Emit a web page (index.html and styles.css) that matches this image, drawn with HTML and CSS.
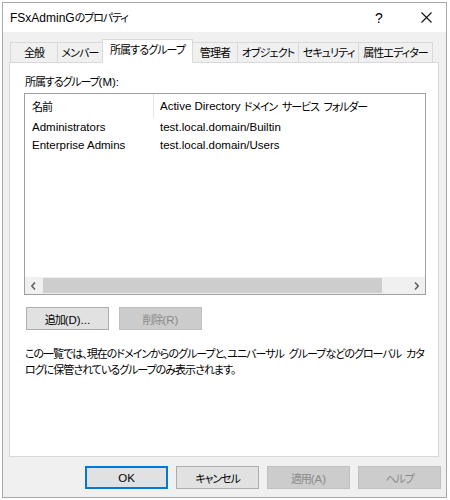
FILE: index.html
```html
<!DOCTYPE html>
<html lang="ja">
<head>
<meta charset="utf-8">
<title>FSxAdminGのプロパティ</title>
<link rel="stylesheet" href="styles.css">
</head>
<body>
<div class="window">
  <div class="titlebar">
    <span class="title">FSxAdminG<span class="ja">のプロパティ</span></span>
    <span class="help">?</span>
    <span class="close"><svg width="11" height="11" viewBox="0 0 11 11"><path d="M0.5 0.5L10.5 10.5M10.5 0.5L0.5 10.5" stroke="#111" stroke-width="1.1" fill="none"/></svg></span>
  </div>
  <div class="client">
    <div class="tabs">
      <div class="tab t1 ja">全般</div>
      <div class="tab t2 ja">メンバー</div>
      <div class="tab t3 ja selected">所属するグループ</div>
      <div class="tab t4 ja">管理者</div>
      <div class="tab t5 ja">オブジェクト</div>
      <div class="tab t6 ja">セキュリティ</div>
      <div class="tab t7 ja">属性エディター</div>
    </div>
    <div class="panel">
      <div class="label"><span class="ja">所属するグループ</span>(M):</div>
      <div class="listbox">
        <div class="lv-head">
          <div class="col1"><span class="ja">名前</span></div>
          <div class="col2">Active Directory&nbsp;<span class="ja">ドメイン サービス フォルダー</span></div>
        </div>
        <div class="lv-row">
          <div class="col1">Administrators</div>
          <div class="col2">test.local.domain/Builtin</div>
        </div>
        <div class="lv-row">
          <div class="col1">Enterprise Admins</div>
          <div class="col2">test.local.domain/Users</div>
        </div>
        <div class="lv-fill"></div>
        <div class="hscroll">
          <div class="arrow"><svg width="5" height="8" viewBox="0 0 5 8"><path d="M4 0.5L0.8 4L4 7.5" stroke="#606060" stroke-width="1.6" fill="none"/></svg></div>
          <div class="track">
            <div class="thumb"></div>
          </div>
          <div class="arrow"><svg width="5" height="8" viewBox="0 0 5 8"><path d="M1 0.5L4.2 4L1 7.5" stroke="#606060" stroke-width="1.6" fill="none"/></svg></div>
        </div>
      </div>
      <div class="btnrow">
        <button class="btn"><span class="ja">追加</span>(D)...</button>
        <button class="btn" disabled><span class="ja">削除</span>(R)</button>
      </div>
      <p class="desc ja">この一覧では、現在のドメインからのグループと、ユニバーサル グループなどのグローバル カタ<br>ログに保管されているグループのみ表示されます。</p>
    </div>
    <div class="footer">
      <button class="btn default">OK</button>
      <button class="btn"><span class="ja">キャンセル</span></button>
      <button class="btn" disabled><span class="ja">適用</span>(A)</button>
      <button class="btn" disabled><span class="ja">ヘルプ</span></button>
    </div>
  </div>
</div>
</body>
</html>
```

FILE: styles.css
```css
* {
  box-sizing: border-box;
}

html, body {
  margin: 0;
  padding: 0;
  background: #ffffff;
}

body {
  font-family: "Liberation Sans", "Noto Sans CJK JP", sans-serif;
  font-size: 11.5px;
  color: #000;
}

.ja {
  font-family: "Noto Sans CJK JP", sans-serif;
  font-size: 11px;
  font-feature-settings: "palt";
  letter-spacing: -1.1px;
  word-spacing: 3.5px;
}

.window {
  margin: 2px 0 0 2px;
  width: 445px;
  height: 496px;
  border: 1px solid #a8a8a8;
  display: flex;
  flex-direction: column;
  background: #f0f0f0;
}

.titlebar {
  height: 29px;
  background: #ffffff;
  display: flex;
  align-items: center;
  padding-left: 7px;
  flex: none;
}

.title {
  flex: 1;
  line-height: 16px;
  font-size: 12px;
}

.help {
  font-size: 14px;
  width: 14px;
  margin-right: 35px;
  text-align: center;
}

.close {
  display: flex;
  margin-right: 14px;
}

.client {
  flex: 1;
  display: flex;
  flex-direction: column;
  padding-top: 7px;
}

.tabs {
  display: flex;
  align-items: flex-end;
  height: 24px;
  margin-left: 7px;
  margin-bottom: -1px;
  position: relative;
  z-index: 1;
}

.tab {
  height: 21px;
  border: 1px solid #d9d9d9;
  background: #f0f0f0;
  text-align: center;
  line-height: 19px;
  margin-left: -1px;
  white-space: nowrap;
  letter-spacing: -0.9px;
}

.tab.t1 { width: 48px; margin-left: 0; }
.tab.t2 { width: 46px; }
.tab.t3 { width: 91px; }
.tab.t4 { width: 46px; }
.tab.t5 { width: 62px; }
.tab.t6 { width: 61px; }
.tab.t7 { width: 75px; }

.tab.selected {
  height: 24px;
  background: #ffffff;
  border-bottom: 1px solid #ffffff;
  line-height: 19px;
  position: relative;
  z-index: 2;
}

.panel {
  margin-left: 6px;
  width: 430px;
  height: 395px;
  border: 1px solid #d9d9d9;
  background: #ffffff;
  flex: none;
}

.label {
  margin: 10px 0 0 15px;
  line-height: 16px;
}

.listbox {
  margin: 3px 0 0 14px;
  width: 402px;
  height: 202px;
  border: 1px solid #a0a0a0;
  display: flex;
  flex-direction: column;
}

.lv-head, .lv-row {
  display: flex;
  white-space: nowrap;
}

.lv-head {
  height: 24px;
  align-items: stretch;
}

.lv-head .col1 {
  border-right: 1px solid #e5e5e5;
}

.lv-row {
  height: 18px;
  line-height: 18px;
}

.col1 {
  width: 129px;
  padding-left: 7px;
  display: flex;
  align-items: center;
}

.col2 {
  padding-left: 6px;
  display: flex;
  align-items: center;
}

.lv-fill {
  flex: 1;
}

.hscroll {
  height: 17px;
  display: flex;
  background: #f0f0f0;
}

.arrow {
  width: 17px;
  display: flex;
  align-items: center;
  justify-content: center;
}

.track {
  flex: 1;
  padding: 1px 26px 1px 1px;
  display: flex;
}

.thumb {
  flex: 1;
  background: #cdcdcd;
}

.btnrow {
  display: flex;
  gap: 10px;
  margin: 12px 0 0 16px;
}

.btn {
  width: 83px;
  height: 23px;
  padding: 0;
  border: 1px solid #adadad;
  background: #e1e1e1;
  font-family: "Liberation Sans", "Noto Sans CJK JP", sans-serif;
  font-size: 11.5px;
  color: #000;
}

.btn:disabled {
  background: #cccccc;
  border-color: #bfbfbf;
  color: #8a8a8a;
}

.btn.default {
  border: 2px solid #0078d7;
}

.desc {
  margin: 15px 0 0 15px;
  line-height: 16px;
  white-space: nowrap;
  letter-spacing: -1px;
}

.footer {
  display: flex;
  justify-content: flex-end;
  gap: 8px;
  padding-right: 5px;
  margin-top: 9px;
}
```
